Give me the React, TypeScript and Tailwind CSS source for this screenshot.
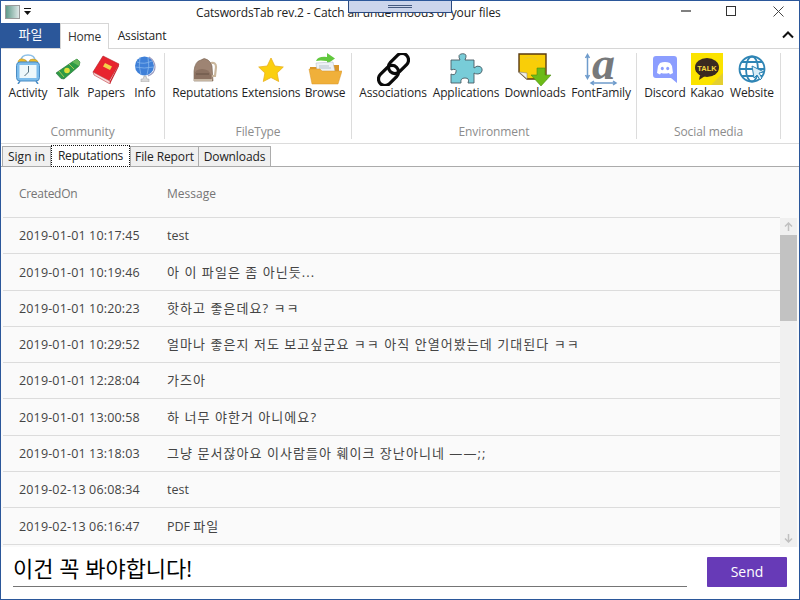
import React from "react";

const FONT = "font-['Open_Sans','Noto_Sans_CJK_KR',sans-serif]";

function Activity() {
  return (
    <svg width="26" height="30" viewBox="0 0 26 30">
      <path d="M6 7Q6 1 13 1t7 6" fill="none" stroke="#8cc0e8" strokeWidth="1.500" />
      <path d="M3 8q1-4 5-3t4 3zM14 8q0-3 4-3t5 3z" fill="#f0bc28" stroke="#a88a30" strokeWidth=".5" />
      <rect x="1.500" y="8" width="23" height="19" rx="3.500" fill="#7cbdec" stroke="#4a8cc4" />
      <rect x="4.500" y="11" width="17" height="13" fill="#eef8fb" />
      <path d="M13.500 12v6l-4 4" stroke="#54707f" fill="none" />
      <path d="M5 27l-2 3M21 27l2 3" stroke="#4a8cc4" strokeWidth="1.500" />
    </svg>
  );
}
function Talk() {
  return (
    <svg width="26" height="22" viewBox="0 0 26 22">
      <path d="M1 15L17 4l5-3 3 3-1 4L9 21l-3-.500z" fill="#2f9b46" stroke="#1f6b2f" strokeWidth=".6" />
      <path d="M17 4l5-3 3 3-1 4z" fill="#65b85a" />
      <circle cx="12" cy="12.500" r="2.800" fill="#dfe03a" />
      <path d="M4 13l5 6M14 6l5 5" stroke="#a8c850" />
    </svg>
  );
}
function Papers() {
  return (
    <svg width="28" height="29" viewBox="0 0 28 29">
      <path d="M11 1l16 8-10 17L1 17z" fill="#e8242e" stroke="#b01a22" strokeWidth=".6" />
      <path d="M1 17l1 3 16 9 0-3z" fill="#f8d8d8" stroke="#c03a40" strokeWidth=".6" />
      <path d="M27 9l0 2-9 18v-3z" fill="#c81e28" />
      <path d="M13 8l7 3.500-2 3.500-7-3.500z" fill="#f4d24a" />
    </svg>
  );
}
function Info() {
  return (
    <svg width="22" height="26" viewBox="0 0 22 26">
      <circle cx="10.500" cy="10" r="9.500" fill="#3f80d8" />
      <path d="M3 6q7 3 15-1M1 11q9 2 19 0M6 1q-2 9 1 18M14 1q2 9-1 18" stroke="#86b6ec" fill="none" strokeWidth=".8" />
      <path d="M15 1q6 4 6 10t-7 9" fill="none" stroke="#9a9cc0" strokeWidth="1.200" />
      <path d="M10 20h2l1 3h2v3H7v-3h2z" fill="#d8d8d8" stroke="#a0a0a0" strokeWidth=".5" />
    </svg>
  );
}
function Backpack() {
  return (
    <svg width="25" height="25" viewBox="0 0 25 25">
      <path d="M1 24V14Q2 4 8 3q3-3 7 0 3 2 4 6l1 15z" fill="#9e8473" stroke="#77624f" strokeWidth=".6" />
      <path d="M18 6q5-1 5 4l-1 9h-3" fill="none" stroke="#c9b69c" strokeWidth="2.200" />
      <path d="M1 18q1-6 8-6t9 6v6H1z" fill="#8b7161" />
      <path d="M1 23h18" stroke="#d8ccb8" strokeWidth="1.500" />
      <path d="M3 17h13" stroke="#665244" />
    </svg>
  );
}
function Star() {
  return (
    <svg width="26" height="25" viewBox="0 0 26 25">
      <path d="M13 1l3.800 8 8.500 1-6.200 6 1.600 8.500L13 20.500 5.300 24.500 6.900 16 .7 10l8.500-1z" fill="#fbcf10" stroke="#e8b020" strokeWidth=".8" strokeLinejoin="round" />
    </svg>
  );
}
function Folder() {
  return (
    <svg width="34" height="32" viewBox="0 0 34 32">
      <path d="M8 8q2-5 11-4V0l8 5.500-8 5.500V8q-7-1-11 0z" fill="#62c83e" />
      <path d="M2 14h10l2-2h17v8H2z" fill="#d9962a" />
      <path d="M8 10l17-1 2 10H9z" fill="#eef2f6" stroke="#aeb8c2" strokeWidth=".5" />
      <path d="M11 13h10M11 15h12" stroke="#9fb0bc" strokeWidth=".7" />
      <path d="M4 31L1 16h11l2 2h20l-4 13z" fill="#f0b03a" stroke="#d8962a" strokeWidth=".5" />
    </svg>
  );
}
function Chain() {
  return (
    <svg width="33" height="33" viewBox="0 0 33 33">
      <g fill="none" stroke="#0a0a0a" strokeWidth="3.200">
        <rect x="15" y="-1" width="13" height="23" rx="6.500" transform="rotate(45 21.500 10.500)" />
        <rect x="5" y="11" width="13" height="23" rx="6.500" transform="rotate(45 11.500 22.500)" />
      </g>
    </svg>
  );
}
function Puzzle() {
  return (
    <svg width="33" height="32" viewBox="0 0 33 32">
      <path d="M1 7h9Q7 1 12.500 .7T15 7h9v8q3-3 6-1.500t2 4.500-4 3-4-1v10h-6q2-5-3-5t-4 5H1v-9q4 2 5-2t-5-2z" fill="#78ccd8" stroke="#4a5c64" strokeWidth=".9" />
    </svg>
  );
}
function Note() {
  return (
    <svg width="34" height="33" viewBox="0 0 34 33">
      <path d="M1 1h27v25H9l-8-7z" fill="#f9ce08" stroke="#5a3a10" strokeWidth="1.400" />
      <path d="M6 6q8-4 14 2" stroke="#eac830" fill="none" />
      <path d="M1 19l8 1v6z" fill="#f2efe6" stroke="#888" strokeWidth=".6" />
      <path d="M19 15h8v7h6L23 33 13 22h6z" fill="#6dbb18" stroke="#4a8f10" strokeWidth=".6" />
    </svg>
  );
}
function FontIcon() {
  return (
    <svg width="32" height="32" viewBox="0 0 32 32" className="overflow-visible">
      <text x="7" y="26" fontFamily="'Liberation Serif',serif" fontStyle="italic" fontWeight="700" fontSize="46" fill="#77797b">a</text>
      <path d="M2.500 2v23M.5 5l2-3.500 2 3.500M.5 22l2 3.500 2-3.500" fill="none" stroke="#6f9ccc" strokeWidth="1.500" />
      <path d="M6 30h25M9 28l-3 2 3 2M28 28l3 2-3 2" fill="none" stroke="#6f9ccc" strokeWidth="1.500" />
    </svg>
  );
}
function Discord() {
  return (
    <svg width="24" height="27" viewBox="0 0 24 27">
      <path d="M3 0h18q3 0 3 3v24l-6-5H3q-3 0-3-3V3q0-3 3-3z" fill="#8c9eff" />
      <path d="M7 7q5-2 10 0l2 3 1 7-3 1.500-1-1.500q-4 1-8 0l-1 1.500-3-1.500 1-7z" fill="#fff" />
      <ellipse cx="9.300" cy="12.500" rx="1.500" ry="1.800" fill="#8c9eff" />
      <ellipse cx="14.700" cy="12.500" rx="1.500" ry="1.800" fill="#8c9eff" />
    </svg>
  );
}
function Kakao() {
  return (
    <svg width="32" height="32" viewBox="0 0 32 32">
      <rect width="32" height="32" fill="#fbe300" />
      <path d="M32 20v12H20z" fill="#e4cf30" />
      <ellipse cx="16" cy="14.500" rx="12" ry="9.500" fill="#3a2a20" />
      <path d="M9 22l-1 5 6-4z" fill="#3a2a20" />
      <text x="16" y="17.500" textAnchor="middle" fontFamily="'Liberation Sans',sans-serif" fontWeight="700" fontSize="7.500" fill="#f4d840">TALK</text>
    </svg>
  );
}
function Website() {
  return (
    <svg width="28" height="28" viewBox="0 0 28 28">
      <g fill="none" stroke="#2f85b5" strokeWidth="1.800">
        <circle cx="14" cy="14" r="12.500" />
        <ellipse cx="14" cy="14" rx="6" ry="12.500" />
        <path d="M2 14h24M4 7h20M4 21h20" />
      </g>
      <path d="M14 11l12 6-5 1 3 5-2 2-3-5-3 3z" fill="#d8ecf6" stroke="#2f85b5" strokeWidth="1" />
    </svg>
  );
}

function RibbonItem({ icon, label, w }: { icon: React.ReactNode; label: string; w: string }) {
  return (
    <div className={`flex flex-col items-center shrink-0 ${w}`}>
      <div className="h-[32px] flex items-center justify-center">{icon}</div>
      <span className="text-[12px] leading-[16px] text-[#1f1f1f] whitespace-nowrap tracking-[-0.15px]">{label}</span>
    </div>
  );
}

function Group({ label, w, children }: { label: string; w: string; children: React.ReactNode }) {
  return (
    <div className={`flex flex-col shrink-0 border-r border-[#dcdcdc] h-[86px] ${w}`}>
      <div className="flex flex-1 pl-[1px]">{children}</div>
      <div className="text-center text-[12px] leading-[16px] pb-[1px] text-[#8c8c8c] tracking-[-0.1px] h-[15px]">{label}</div>
    </div>
  );
}

function Ko({ children }: { children: React.ReactNode }) {
  return <span className="text-[13px] tracking-[1.05px]">{children}</span>;
}

function Lat({ children }: { children: React.ReactNode }) {
  return <span className="block pt-[1px]">{children}</span>;
}

const rows: [string, React.ReactNode][] = [
  ["2019-01-01 10:17:45", <Lat>test</Lat>],
  ["2019-01-01 10:19:46", <Ko>아 이 파일은 좀 아닌듯...</Ko>],
  ["2019-01-01 10:20:23", <Ko>핫하고 좋은데요? ㅋㅋ</Ko>],
  ["2019-01-01 10:29:52", <Ko>얼마나 좋은지 저도 보고싶군요 ㅋㅋ 아직 안열어봤는데 기대된다 ㅋㅋ</Ko>],
  ["2019-01-01 12:28:04", <Ko>가즈아</Ko>],
  ["2019-01-01 13:00:58", <Ko>하 너무 야한거 아니에요?</Ko>],
  ["2019-01-01 13:18:03", <Ko>그냥 문서잖아요 이사람들아 훼이크 장난아니네 ――;;</Ko>],
  ["2019-02-13 06:08:34", <Lat>test</Lat>],
  ["2019-02-13 06:16:47", <>PDF <Ko>파일</Ko></>],
];

export default function App() {
  return (
    <div className={`${FONT} relative w-[800px] h-[600px] overflow-hidden bg-white border border-[#2b579a] flex flex-col`}>
      {/* title bar */}
      <div className="h-[22px] shrink-0 flex items-center relative">
        <div className="ml-[4px] w-[15px] h-[14px] border border-[#9a9a9a] bg-gradient-to-r from-[#5f9a8a] to-[#dfe8e8]" />
        <svg width="10" height="8" viewBox="0 0 10 8" className="ml-[3px]">
          <path d="M1 0h7v1H1zM1 3h7L4.500 7z" fill="#111" />
        </svg>
        <span className="absolute left-[195px] top-[3px] text-[12px] leading-[18px] text-[#222] whitespace-nowrap tracking-[-0.13px]">CatswordsTab rev.2 - Catch all undermoods of your files</span>
        <div className="absolute right-[15px] top-0 flex items-center h-[20px]">
          <div className="w-[10px] h-[2px] bg-[#808080] mr-[35px]" />
          <div className="w-[10px] h-[10px] border border-[#333] mr-[37px]" />
          <svg width="11" height="11" viewBox="0 0 11 11"><path d="M0.500 0.500l10 10M10.500 0.500l-10 10" stroke="#444" /></svg>
        </div>
        <div className="absolute left-[347px] top-0 w-[104px] h-[12px] bg-[#cbd5ec] border border-[#2b4a80] border-t-0 flex flex-col items-center justify-center gap-[1px]">
          <div className="w-[24px] h-[1px] bg-[#445a80]" />
          <div className="w-[24px] h-[1px] bg-[#445a80]" />
        </div>
      </div>
      {/* ribbon tabs */}
      <div className="h-[26px] shrink-0 flex items-end border-b border-[#d6d6d6] relative">
        <div className="w-[59px] h-[25px] bg-[#2b579a] text-white text-[13px] leading-[23px] text-center">파일</div>
        <div className="w-[49px] h-[26px] -mb-[1px] bg-white border border-[#d6d6d6] border-b-0 text-[12px] leading-[25px] text-center text-[#333] tracking-[-0.2px]">Home</div>
        <div className="w-[66px] h-[25px] text-[12px] leading-[25px] text-center text-[#222] tracking-[-0.2px]">Assistant</div>
        <svg width="12" height="8" viewBox="0 0 12 8" className="absolute right-[5px] top-[8px]">
          <path d="M1 6.500l5-5 5 5" fill="none" stroke="#111" strokeWidth="2" />
        </svg>
      </div>
      {/* ribbon */}
      <div className="h-[95px] shrink-0 flex pt-[4px] border-b border-[#dcdcdc]">
        <Group label="Community" w="w-[164px]">
          <div className="w-[6px] shrink-0" />
          <RibbonItem icon={<Activity />} label="Activity" w="w-[40px]" />
          <RibbonItem icon={<Talk />} label="Talk" w="w-[40px]" />
          <RibbonItem icon={<Papers />} label="Papers" w="w-[36px]" />
          <RibbonItem icon={<Info />} label="Info" w="w-[42px]" />
        </Group>
        <Group label="FileType" w="w-[187px]">
          <div className="w-[6px] shrink-0" />
          <RibbonItem icon={<Backpack />} label="Reputations" w="w-[66px]" />
          <RibbonItem icon={<Star />} label="Extensions" w="w-[66px]" />
          <RibbonItem icon={<Folder />} label="Browse" w="w-[42px]" />
        </Group>
        <Group label="Environment" w="w-[285px]">
          <div className="w-[6px] shrink-0" />
          <RibbonItem icon={<Chain />} label="Associations" w="w-[68px]" />
          <RibbonItem icon={<Puzzle />} label="Applications" w="w-[78px]" />
          <RibbonItem icon={<Note />} label="Downloads" w="w-[60px]" />
          <RibbonItem icon={<FontIcon />} label="FontFamily" w="w-[72px]" />
        </Group>
        <Group label="Social media" w="w-[144px]">
          <div className="w-[5px] shrink-0" />
          <RibbonItem icon={<Discord />} label="Discord" w="w-[44px]" />
          <RibbonItem icon={<Kakao />} label="Kakao" w="w-[40px]" />
          <RibbonItem icon={<Website />} label="Website" w="w-[50px]" />
        </Group>
      </div>
      {/* tabs */}
      <div className="h-[23px] shrink-0 flex items-end pl-[1px] border-b border-[#ababab] relative">
        <div className="h-[20px] w-[49px] bg-[#f0f0f0] border border-[#acacac] border-b-0 text-[12px] leading-[19px] text-center text-[#222]">Sign in</div>
        <div className="h-[22px] w-[79px] bg-white border border-dotted border-[#111] text-[12px] leading-[19px] text-center text-[#222] -mb-[1px] tracking-[-0.2px]">Reputations</div>
        <div className="h-[20px] w-[69px] bg-[#f0f0f0] border border-[#acacac] border-b-0 text-[12px] leading-[19px] text-center text-[#222] tracking-[-0.1px]">File Report</div>
        <div className="h-[20px] w-[73px] -ml-[1px] bg-[#f0f0f0] border border-[#acacac] border-b-0 text-[12px] leading-[19px] text-center text-[#222] tracking-[-0.1px]">Downloads</div>
      </div>
      {/* table */}
      <div className="flex-1 min-h-0 relative bg-[#fafafa] overflow-hidden pl-[2px]">
        <div className="w-[777px]">
          <div className="h-[51px] flex items-center border-b border-[#dcdcdc] text-[12px] text-[#757575] pt-[3px]">
            <div className="w-[164px] pl-[16px] tracking-[-0.3px]">CreatedOn</div>
            <div>Message</div>
          </div>
          {rows.map((r, i) => (
            <div key={i} className="h-[36.300px] flex items-center border-b border-[#dcdcdc] text-[12.500px] text-[#444] whitespace-nowrap pt-[1px]">
              <div className="w-[164px] pl-[16px] pt-[1px] tracking-[0.15px]">{r[0]}</div>
              <div>{r[1]}</div>
            </div>
          ))}
        </div>
        <div className="absolute right-[2px] top-[51px] bottom-[0px] w-[17px] bg-[#f0f0f0] flex flex-col">
          <div className="h-[17px] flex items-center justify-center">
            <svg width="9" height="9" viewBox="0 0 9 9"><path d="M4.500 9V1M1 4.500l3.500-3.500 3.500 3.500" fill="none" stroke="#c0c0c0" strokeWidth="1.500" /></svg>
          </div>
          <div className="h-[86px] bg-[#c2c2c2]" />
          <div className="flex-1" />
          <div className="h-[17px] flex items-center justify-center">
            <svg width="9" height="9" viewBox="0 0 9 9"><path d="M4.500 0v8M1 4.500l3.500 3.500 3.500-3.500" fill="none" stroke="#c0c0c0" strokeWidth="1.500" /></svg>
          </div>
        </div>
      </div>
      {/* composer */}
      <div className="h-[52px] shrink-0 bg-white flex items-start relative">
        <div className="ml-[12px] mt-[5px] w-[674px] h-[35px] border-b border-[#757575] text-[22px] leading-[32px] text-black">이건 꼭 봐야합니다!</div>
        <div className="ml-[20px] mt-[10px] w-[80px] h-[30px] bg-[#673ab7] rounded-[1px] text-white text-[14px] leading-[30px] text-center">Send</div>
      </div>
    </div>
  );
}
